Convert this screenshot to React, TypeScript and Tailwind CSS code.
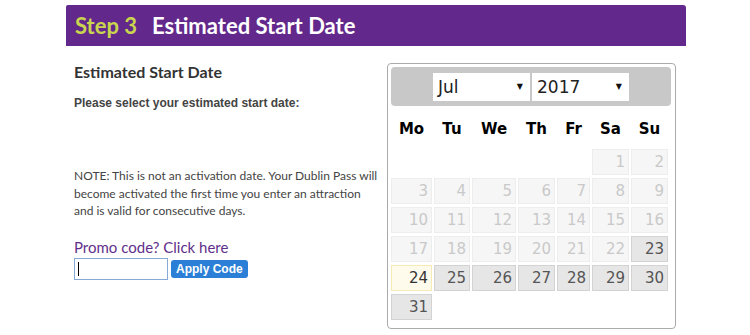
import React from 'react';

type Cell = { day?: number; state?: 'off' | 'on' | 'today' };

const WIDTHS = ['w-[41px]', 'w-[36px]', 'w-[44px]', 'w-[37px]', 'w-[33px]', 'w-[37px]', 'w-[37px]'];
const DAY_NAMES = ['Mo', 'Tu', 'We', 'Th', 'Fr', 'Sa', 'Su'];

function buildWeeks(): Cell[][] {
  // July 2017 starts on a Saturday
  const cells: Cell[] = [{}, {}, {}, {}, {}];
  for (let d = 1; d <= 31; d++) {
    cells.push({ day: d, state: d < 23 ? 'off' : d === 24 ? 'today' : 'on' });
  }
  const weeks: Cell[][] = [];
  for (let i = 0; i < cells.length; i += 7) weeks.push(cells.slice(i, i + 7));
  return weeks;
}

function DayCell({ cell, width }: { cell: Cell; width: string }) {
  if (!cell.day) return <div className={`${width} h-[26px]`} />;
  const tone =
    cell.state === 'off'
      ? 'bg-[#f6f6f6] border-[#ededed] text-[#c9c9c9]'
      : cell.state === 'today'
        ? 'bg-[#fefbec] border-[#f6ebb2] text-[#333]'
        : 'bg-[#e6e6e6] border-[#d3d3d3] text-[#555]';
  return (
    <div className={`${width} h-[26px] border ${tone} flex items-center justify-end pr-[3px] text-[15px] leading-none`}>
      {cell.day}
    </div>
  );
}

function FakeSelect({ value }: { value: string }) {
  return (
    <div className="w-[97px] h-[28px] bg-white flex items-center justify-between pl-[5px] pr-[7px] text-[17px] text-[#222]">
      <span className="pt-[1px]">{value}</span>
      <span className="text-[8px] text-[#111]">▼</span>
    </div>
  );
}

export default function App() {
  const weeks = buildWeeks();
  return (
    <div className="w-[750px] h-[335px] bg-white overflow-hidden">
      <div className="ml-[66px] w-[620px]">
        <div className="mt-[5px] h-[41px] bg-[#63288b] rounded-tr-[3px] rounded-tl-[2px] flex items-center pl-[9px] font-['Lato',sans-serif] font-bold text-[22px]">
          <span className="text-[#c9d54f]">Step 3</span>
          <span className="ml-[15px] text-white">Estimated Start Date</span>
        </div>

        <div className="mt-[17px] flex">
          <div className="w-[321px] pl-[8px]">
            <div className="mt-[-1px] font-['Lato',sans-serif] font-bold text-[16px] leading-[19px] text-[#333]">
              Estimated Start Date
            </div>
            <div className="mt-[15px] font-['Liberation_Sans',Arial,sans-serif] font-bold text-[12px] leading-[14px] text-[#444]">
              Please select your estimated start date:
            </div>
            <p className="mt-[57px] whitespace-nowrap font-['Lato',sans-serif] text-[12px] leading-[17.5px] text-[#444]">
              NOTE: This is not an activation date. Your Dublin Pass will
              <br />
              become activated the first time you enter an attraction
              <br />
              and is valid for consecutive days.
            </p>
            <div className="mt-[18px] font-['Lato',sans-serif] text-[15px] leading-[18px] text-[#5f2f8a]">
              Promo code? Click here
            </div>
            <div className="mt-[2px] flex items-center">
              <div className="w-[94px] h-[22px] border border-[#86a9d6] bg-white flex items-center pl-[3px]">
                <span className="w-[1px] h-[14px] bg-black" />
              </div>
              <button className="ml-[3px] h-[18px] px-[5px] rounded-[3px] bg-[#2b7fd6] text-white font-['Liberation_Sans',Arial,sans-serif] font-bold text-[12px] leading-none">
                Apply Code
              </button>
            </div>
          </div>

          <div className="w-[289px] h-[266px] border border-[#ababab] rounded-[4px] p-[3px] font-['DejaVu_Sans',Verdana,sans-serif]">
            <div className="h-[39px] w-[280px] bg-[#c8c8c8] rounded-[4px] flex items-center justify-center gap-[2px] pt-[1px]">
              <FakeSelect value="Jul" />
              <FakeSelect value="2017" />
            </div>
            <div className="flex gap-[2px] h-[43px] items-center pt-[3px]">
              {DAY_NAMES.map((n, i) => (
                <div key={n} className={`${WIDTHS[i]} text-center font-bold text-[15px] text-black`}>
                  {n}
                </div>
              ))}
            </div>
            <div className="flex flex-col gap-[3px]">
              {weeks.map((w, wi) => (
                <div key={wi} className="flex gap-[2px]">
                  {w.map((c, ci) => (
                    <DayCell key={ci} cell={c} width={WIDTHS[ci]} />
                  ))}
                </div>
              ))}
            </div>
          </div>
        </div>
      </div>
    </div>
  );
}
